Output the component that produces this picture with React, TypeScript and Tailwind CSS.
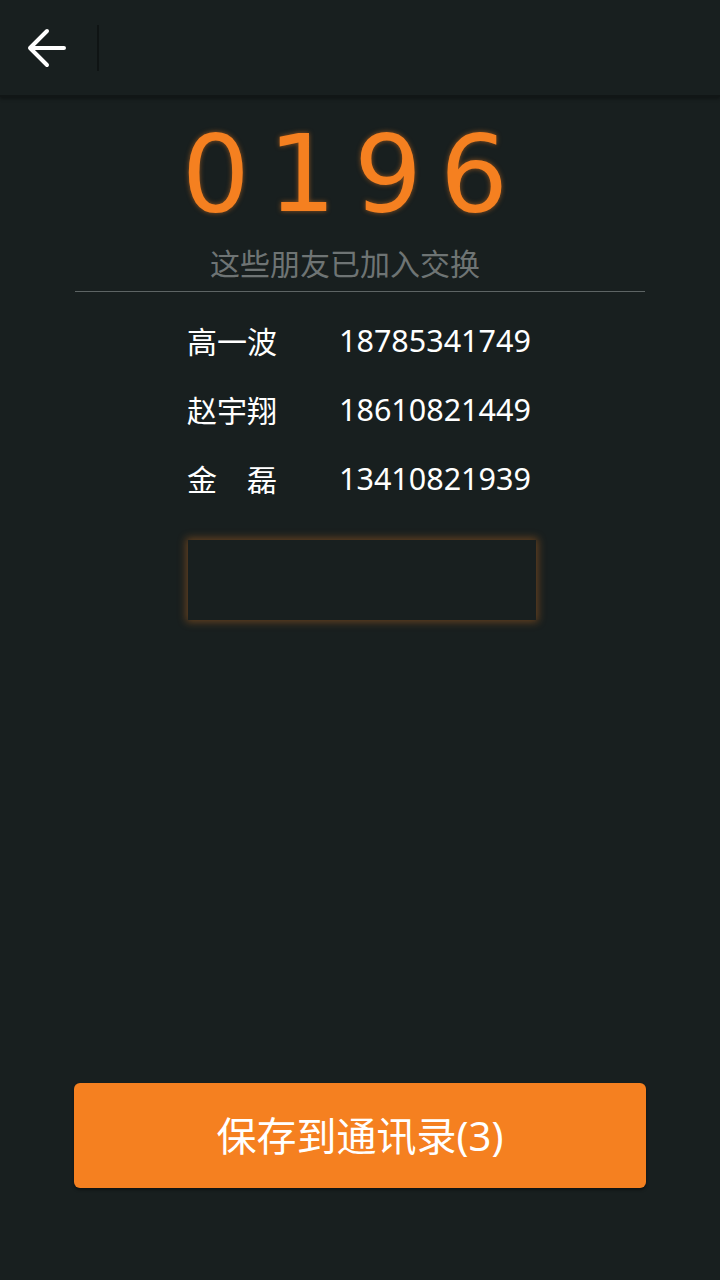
import React from "react";

const contacts = [
  { name: "高一波", phone: "18785341749" },
  { name: "赵宇翔", phone: "18610821449" },
  { name: "金\u3000磊", phone: "13410821939" },
];

export default function App() {
  return (
    <div
      className="w-[720px] h-[1280px] bg-[#181f1f] flex flex-col"
      style={{ fontFamily: '"Noto Sans", "Noto Sans CJK SC", sans-serif' }}
    >
      {/* header */}
      <div className="h-[97px] flex items-center border-b-2 border-[#111616] shadow-[0_2px_3px_rgba(0,0,0,0.35)]">
        <button className="w-[94px] h-full flex items-center justify-center">
          <svg width="40" height="40" viewBox="0 0 40 40" fill="none" stroke="white" strokeWidth="4" strokeLinecap="round" strokeLinejoin="round">
            <path d="M37 20H3M20 3L3 20l17 17" />
          </svg>
        </button>
        <div className="ml-[3px] w-[2px] h-[46px] bg-[#0f1414]" />
      </div>

      {/* count */}
      <div className="flex flex-col items-center">
        <div
          className="mt-[13px] pr-[12px] text-[107px] leading-[128px] tracking-[18px] text-[#f58020] [text-shadow:0_0_5px_rgba(245,128,32,0.55)]"
          style={{ fontFamily: '"DejaVu Sans", sans-serif' }}
        >
          0196
        </div>
        <div className="mt-[6px] pr-[30px] text-[30px] leading-[40px] text-[#6e7474]">这些朋友已加入交换</div>
      </div>
      <div className="mx-[75px] mt-[7px] h-px bg-[#5d6464]" />

      {/* list */}
      <div className="pl-[187px] pt-[27px] flex flex-col gap-[25px]">
        {contacts.map((c) => (
          <div key={c.phone} className="flex items-center h-[44px] text-white">
            <span className="w-[152px] text-[30px] whitespace-pre">{c.name}</span>
            <span className="text-[30.5px]">{c.phone}</span>
          </div>
        ))}
      </div>

      <div className="ml-[188px] mt-[39px] w-[348px] h-[80px] bg-[#181f1f] shadow-[0_0_8px_2px_rgba(245,128,32,0.35)]" />

      <div className="flex-1" />

      <div className="px-[74px] pb-[92px]">
        <button className="w-full h-[105px] rounded-[6px] bg-[#f58020] text-white text-[40px] shadow-[0_2px_3px_rgba(0,0,0,0.4)]">
          保存到通讯录(3)
        </button>
      </div>
    </div>
  );
}
